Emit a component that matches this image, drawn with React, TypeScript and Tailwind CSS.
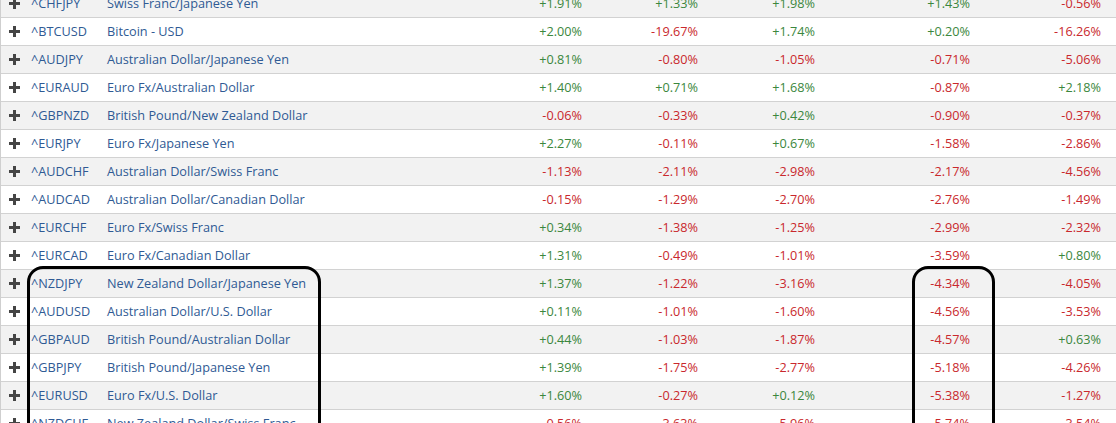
import React from "react";

type Row = [string, string, string, string, string, string, string];

const rows: Row[] = [
  ["^CHFJPY", "Swiss Franc/Japanese Yen", "+1.91%", "+1.33%", "+1.98%", "+1.43%", "-0.56%"],
  ["^BTCUSD", "Bitcoin - USD", "+2.00%", "-19.67%", "+1.74%", "+0.20%", "-16.26%"],
  ["^AUDJPY", "Australian Dollar/Japanese Yen", "+0.81%", "-0.80%", "-1.05%", "-0.71%", "-5.06%"],
  ["^EURAUD", "Euro Fx/Australian Dollar", "+1.40%", "+0.71%", "+1.68%", "-0.87%", "+2.18%"],
  ["^GBPNZD", "British Pound/New Zealand Dollar", "-0.06%", "-0.33%", "+0.42%", "-0.90%", "-0.37%"],
  ["^EURJPY", "Euro Fx/Japanese Yen", "+2.27%", "-0.11%", "+0.67%", "-1.58%", "-2.86%"],
  ["^AUDCHF", "Australian Dollar/Swiss Franc", "-1.13%", "-2.11%", "-2.98%", "-2.17%", "-4.56%"],
  ["^AUDCAD", "Australian Dollar/Canadian Dollar", "-0.15%", "-1.29%", "-2.70%", "-2.76%", "-1.49%"],
  ["^EURCHF", "Euro Fx/Swiss Franc", "+0.34%", "-1.38%", "-1.25%", "-2.99%", "-2.32%"],
  ["^EURCAD", "Euro Fx/Canadian Dollar", "+1.31%", "-0.49%", "-1.01%", "-3.59%", "+0.80%"],
  ["^NZDJPY", "New Zealand Dollar/Japanese Yen", "+1.37%", "-1.22%", "-3.16%", "-4.34%", "-4.05%"],
  ["^AUDUSD", "Australian Dollar/U.S. Dollar", "+0.11%", "-1.01%", "-1.60%", "-4.56%", "-3.53%"],
  ["^GBPAUD", "British Pound/Australian Dollar", "+0.44%", "-1.03%", "-1.87%", "-4.57%", "+0.63%"],
  ["^GBPJPY", "British Pound/Japanese Yen", "+1.39%", "-1.75%", "-2.77%", "-5.18%", "-4.26%"],
  ["^EURUSD", "Euro Fx/U.S. Dollar", "+1.60%", "-0.27%", "+0.12%", "-5.38%", "-1.27%"],
  ["^NZDCHF", "New Zealand Dollar/Swiss Franc", "-0.56%", "-3.63%", "-5.96%", "-5.74%", "-3.54%"],
];

function Pct({ v, w }: { v: string; w: string }) {
  const pos = v.startsWith("+");
  return (
    <div className={`${w} shrink-0 pr-[8px] text-right ${pos ? "text-[#3b873d]" : "text-[#c9282d]"}`}>{v}</div>
  );
}

function Plus() {
  return (
    <svg width="11" height="11" viewBox="0 0 11 11" className="block">
      <rect x="4" y="0" width="3" height="11" fill="#454545" />
      <rect x="0" y="4" width="11" height="3" fill="#454545" />
    </svg>
  );
}

export default function App() {
  return (
    <div
      className="relative h-[423px] w-[1116px] overflow-hidden bg-white text-[12.7px]"
      style={{ fontFamily: '"Open Sans", "Noto Sans", sans-serif' }}
    >
      <div className="-mt-[10px] border-l border-[#cfcfcf]">
        {rows.map((r, i) => (
          <div
            key={r[0]}
            className={`flex h-[28px] items-center border-b border-[#d2d2d2] ${i % 2 === 0 ? "bg-[#f2f2f2]" : "bg-white"}`}
          >
            <div className="flex w-[30px] shrink-0 justify-start pl-[8px]">
              <Plus />
            </div>
            <div className="w-[76px] shrink-0 text-[#2f5a94]">{r[0]}</div>
            <div className="w-[383px] shrink-0 text-[#2f5a94]">{r[1]}</div>
            <Pct v={r[2]} w="w-[100px]" />
            <Pct v={r[3]} w="w-[116px]" />
            <Pct v={r[4]} w="w-[117px]" />
            <Pct v={r[5]} w="w-[155px]" />
            <Pct v={r[6]} w="w-[131px]" />
          </div>
        ))}
      </div>
      <div className="pointer-events-none absolute left-[27px] top-[266px] h-[200px] w-[294px] rounded-[16px] border-[3px] border-black" />
      <div className="pointer-events-none absolute left-[912px] top-[266px] h-[200px] w-[83px] rounded-[16px] border-[3px] border-black" />
    </div>
  );
}
